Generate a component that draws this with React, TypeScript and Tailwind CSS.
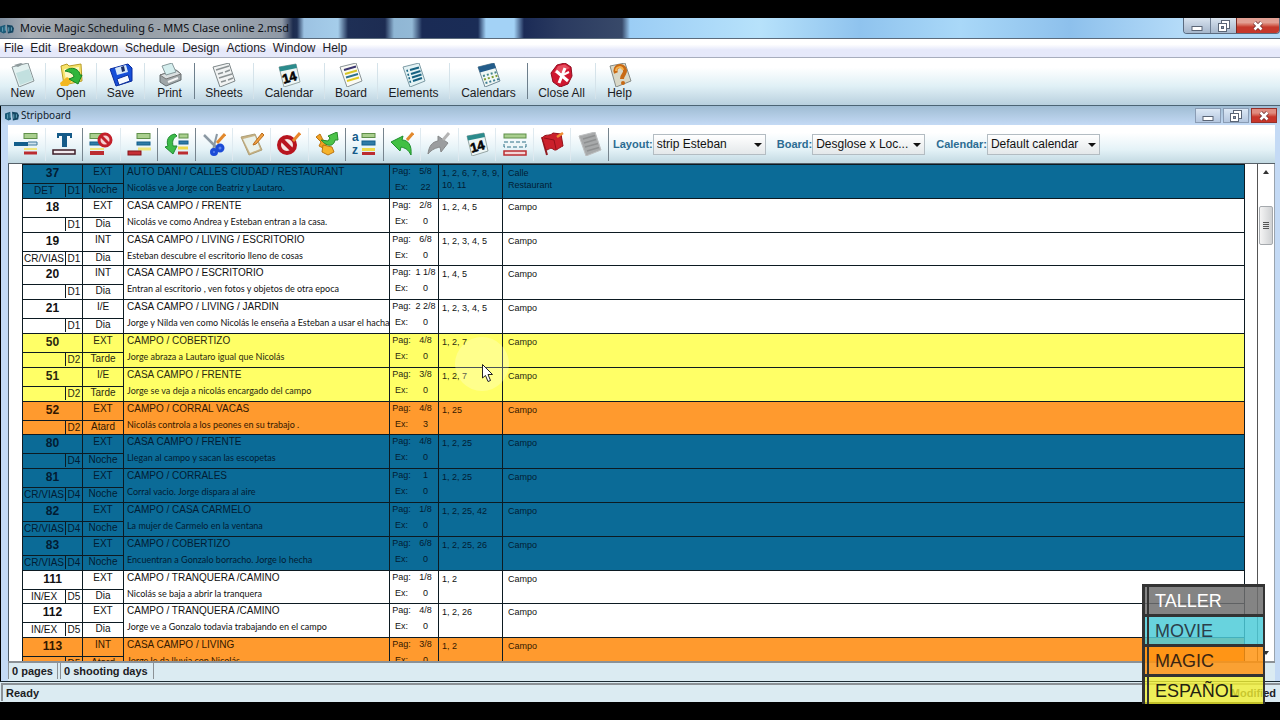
import type { ReactNode } from "react";

type Tone = "day" | "evening" | "dusk" | "night";

interface Strip {
  scene: string;
  tag: string;
  day: string;
  place: string;
  time: string;
  slug: string;
  text: string;
  pages: string;
  extras: string;
  cast: string[];
  location: string[];
  tone: Tone;
}

const TONES: Record<Tone, string> = {
  day: "bg-white text-[#111]",
  evening: "bg-[#ffff66] text-[#2a2a10]",
  dusk: "bg-[#ff9a2e] text-[#331800]",
  night: "bg-[#0b6b97] text-[#021c33]",
};

const STRIPS: Strip[] = [
  { scene: "37", tag: "DET", day: "D1", place: "EXT", time: "Noche", slug: "AUTO DANI / CALLES CIUDAD / RESTAURANT", text: "Nicolás ve a Jorge con Beatriz y Lautaro.", pages: "5/8", extras: "22", cast: ["1, 2, 6, 7, 8, 9,", "10, 11"], location: ["Calle", "Restaurant"], tone: "night" },
  { scene: "18", tag: "", day: "D1", place: "EXT", time: "Dia", slug: "CASA CAMPO / FRENTE", text: "Nicolás ve como Andrea y Esteban entran a la casa.", pages: "2/8", extras: "0", cast: ["1, 2, 4, 5"], location: ["Campo"], tone: "day" },
  { scene: "19", tag: "CR/VIAS", day: "D1", place: "INT", time: "Dia", slug: "CASA CAMPO / LIVING / ESCRITORIO", text: "Esteban descubre el escritorio lleno de cosas", pages: "6/8", extras: "0", cast: ["1, 2, 3, 4, 5"], location: ["Campo"], tone: "day" },
  { scene: "20", tag: "", day: "D1", place: "INT", time: "Dia", slug: "CASA CAMPO / ESCRITORIO", text: "Entran al escritorio , ven fotos y objetos de otra epoca", pages: "1 1/8", extras: "0", cast: ["1, 4, 5"], location: ["Campo"], tone: "day" },
  { scene: "21", tag: "", day: "D1", place: "I/E", time: "Dia", slug: "CASA CAMPO / LIVING / JARDIN", text: "Jorge y Nilda ven como Nicolás le enseña a Esteban a usar el hacha", pages: "2 2/8", extras: "0", cast: ["1, 2, 3, 4, 5"], location: ["Campo"], tone: "day" },
  { scene: "50", tag: "", day: "D2", place: "EXT", time: "Tarde", slug: "CAMPO / COBERTIZO", text: "Jorge abraza a Lautaro igual que Nicolás", pages: "4/8", extras: "0", cast: ["1, 2, 7"], location: ["Campo"], tone: "evening" },
  { scene: "51", tag: "", day: "D2", place: "I/E", time: "Tarde", slug: "CASA CAMPO / FRENTE", text: "Jorge se va deja a nicolás encargado del campo", pages: "3/8", extras: "0", cast: ["1, 2, 7"], location: ["Campo"], tone: "evening" },
  { scene: "52", tag: "", day: "D2", place: "EXT", time: "Atard", slug: "CAMPO / CORRAL VACAS", text: "Nicolás controla a los peones en su trabajo .", pages: "4/8", extras: "3", cast: ["1, 25"], location: ["Campo"], tone: "dusk" },
  { scene: "80", tag: "", day: "D4", place: "EXT", time: "Noche", slug: "CASA CAMPO / FRENTE", text: "Llegan al campo y sacan las escopetas", pages: "4/8", extras: "0", cast: ["1, 2, 25"], location: ["Campo"], tone: "night" },
  { scene: "81", tag: "CR/VIAS", day: "D4", place: "EXT", time: "Noche", slug: "CAMPO / CORRALES", text: "Corral vacio. Jorge dispara al aire", pages: "1", extras: "0", cast: ["1, 2, 25"], location: ["Campo"], tone: "night" },
  { scene: "82", tag: "CR/VIAS", day: "D4", place: "EXT", time: "Noche", slug: "CAMPO / CASA CARMELO", text: "La mujer de Carmelo en la ventana", pages: "1/8", extras: "0", cast: ["1, 2, 25, 42"], location: ["Campo"], tone: "night" },
  { scene: "83", tag: "CR/VIAS", day: "D4", place: "EXT", time: "Noche", slug: "CAMPO / COBERTIZO", text: "Encuentran a Gonzalo borracho. Jorge lo hecha", pages: "6/8", extras: "0", cast: ["1, 2, 25, 26"], location: ["Campo"], tone: "night" },
  { scene: "111", tag: "IN/EX", day: "D5", place: "EXT", time: "Dia", slug: "CAMPO / TRANQUERA /CAMINO", text: "Nicolás se baja a abrir la tranquera", pages: "1/8", extras: "0", cast: ["1, 2"], location: ["Campo"], tone: "day" },
  { scene: "112", tag: "IN/EX", day: "D5", place: "EXT", time: "Dia", slug: "CAMPO / TRANQUERA /CAMINO", text: "Jorge ve a Gonzalo todavia trabajando en el campo", pages: "4/8", extras: "0", cast: ["1, 2, 26"], location: ["Campo"], tone: "day" },
  { scene: "113", tag: "", day: "D5", place: "INT", time: "Atard", slug: "CASA CAMPO / LIVING", text: "Jorge le da lluvia con Nicolás", pages: "3/8", extras: "0", cast: ["1, 2"], location: ["Campo"], tone: "dusk" },
];

function Icon({ children }: { children: ReactNode }) {
  return (
    <svg viewBox="0 0 24 24" className="size-6" aria-hidden="true">
      {children}
    </svg>
  );
}

const PAGE = "M1 4 L17 0 L23 18 L8 24 Z";

const newIcon = (
  <Icon>
    <path d={PAGE} fill="#e3f1f0" stroke="#8a9698" />
    <path d="M5 10 L18 6 L22 17 L9 22 Z" fill="#c2e0df" />
    <path d="M3 2 L7 4 L12 1 L10 0 Z" fill="#8d999b" />
  </Icon>
);
const openIcon = (
  <Icon>
    <path d="M2 3 L8 1 L10 3 L22 1 L23 18 L5 22 Z" fill="#f7e36a" stroke="#b99c29" />
    <path d="M5 6 L20 4 L20 15 L7 17 Z" fill="#fdf8c4" />
    <path d="M1 20 L8 14 L13 17 L9 23 L2 23 Z" fill="#f2b822" />
    <path d="M6 8 C13 2 21 7 21 12 L23 12 L19 21 L10 16 L15 14 C14 10 11 9 6 8 Z" fill="#2fb53a" stroke="#158323" />
  </Icon>
);
const saveIcon = (
  <Icon>
    <path d="M1 6 L19 1 L23 5 L23 18 L7 23 Z" fill="#164fd8" stroke="#0a2b9c" />
    <path d="M6 5 L17 2 L19 9 L8 12 Z" fill="#d8e9f8" />
    <path d="M12 4 L15 3 L16 8 L13 9 Z" fill="#1a2c66" />
    <path d="M8 16 L19 12 L21 18 L10 22 Z" fill="#f5f9ff" stroke="#0b2f9a" />
  </Icon>
);
const printIcon = (
  <Icon>
    <path d="M2 12 L18 7 L23 11 L23 17 L8 23 L2 19 Z" fill="#9fa6a8" stroke="#666e71" />
    <path d="M2 12 L18 7 L23 11 L8 16 Z" fill="#dadfe0" stroke="#777" />
    <path d="M4 3 L14 0 L18 9 L8 12 Z" fill="#d5eeee" stroke="#86999b" />
    <path d="M10 19 L20 15" stroke="#f5f5f5" strokeWidth="2" />
  </Icon>
);
const sheetsIcon = (
  <Icon>
    <path d={PAGE} fill="#f1f3f3" stroke="#7e8789" />
    <path d="M4 7 L17 3 M6 11 L11 9.500 M13 9 L18 7 M7 15 L20 11 M9 19 L14 17.500 M16 17 L21 15" stroke="#8b9294" strokeWidth="1.600" />
  </Icon>
);
const calendarIcon = (
  <Icon>
    <path d="M2 4 L19 1 L23 19 L7 24 Z" fill="#eef6f5" stroke="#95a5a5" />
    <path d="M2 4 L19 1 L20 5 L3 8.500 Z" fill="#2b8b8c" />
    <text x="5" y="19" fontSize="13" fontWeight="700" stroke="#050505" strokeWidth="0.600" fontFamily="Liberation Sans, sans-serif" transform="rotate(-16 12 14)" fill="#050505">14</text>
  </Icon>
);
const boardIcon = (
  <Icon>
    <path d={PAGE} fill="#fafaf4" stroke="#8b9496" />
    <path d="M5 7 L17 3.500" stroke="#3b3570" strokeWidth="2" />
    <path d="M6 11 L18 7.500" stroke="#d6c527" strokeWidth="2" />
    <path d="M7 14.500 L19 11" stroke="#2c7191" strokeWidth="2" />
    <path d="M8 18 L20 14.500" stroke="#e0cc26" strokeWidth="2" />
  </Icon>
);
const elementsIcon = (
  <Icon>
    <path d={PAGE} fill="#e4f3f5" stroke="#7d9ba4" />
    <path d="M8 7 L17 4.500 M9 11 L18.500 8 M10 14.500 L19.500 11.500 M11 18 L20 15" stroke="#176281" strokeWidth="2" />
    <path d="M4.500 8 L6 7.500 M5.500 12 L7 11.500 M6.500 15.500 L8 15 M7.500 19 L9 18.500" stroke="#176281" strokeWidth="2" />
  </Icon>
);
const calendarsIcon = (
  <Icon>
    <path d={PAGE} fill="#f0f7f4" stroke="#718a98" />
    <path d="M1 4 L17 0 L19 5 L3 9.500 Z" fill="#235c8a" />
    <path d="M6 13 L20 9" stroke="#45868a" strokeWidth="2" strokeDasharray="2 2" />
    <path d="M7 16.500 L21 12.500" stroke="#7e9c33" strokeWidth="2" strokeDasharray="2 2" />
    <path d="M8.500 20 L22 16" stroke="#3f7f95" strokeWidth="2" strokeDasharray="2 2" />
  </Icon>
);
const closeAllIcon = (
  <Icon>
    <path d="M7 2 L15 0 L21 4 L22 13 L18 21 L10 24 L3 19 L1 10 Z" fill="#cf1730" stroke="#900d20" />
    <path d="M8 3 L15 1.500 L20 5 L12 9 L4 10 Z" fill="#e64d5e" />
    <path d="M6 8 L18 18 M15 5 L9 20" stroke="#fff" strokeWidth="3" />
    <path d="M13 12 L19 9" stroke="#fff" strokeWidth="2" />
  </Icon>
);
const helpIcon = (
  <Icon>
    <path d="M2 3 L17 0 L23 18 L8 24 Z" fill="#d9d8c7" stroke="#858b87" />
    <path d="M8 10 C5 3 15 0 17 7 C18 11 14 11 14 16" fill="none" stroke="#c86a14" strokeWidth="4" />
    <path d="M8 8 C8 3 14 3 15 7" fill="none" stroke="#f7b14c" strokeWidth="2" />
    <circle cx="15" cy="20" r="2" fill="#c86a14" />
  </Icon>
);

const insertStripIcon = (
  <Icon>
    <rect x="10" y="1.500" width="13" height="5" fill="#a9cf8e" stroke="#5f8f4a" />
    <path d="M0 12 H14" stroke="#135f8c" strokeWidth="4" />
    <path d="M14 10 H23 V13 H14" fill="#cfe3ee" stroke="#417a9b" />
    <path d="M10 17 H23" stroke="#efe67c" strokeWidth="2" />
    <path d="M10 21 H23" stroke="#bb2c30" strokeWidth="3" />
  </Icon>
);
const bannerIcon = (
  <Icon>
    <path d="M5 1 H20 V6 H18 V4 H15 V15 H10 V4 H7 V6 H5 Z" fill="#155b89" />
    <rect x="1" y="18" width="22" height="4" fill="#f1e9ee" stroke="#3d1c27" strokeWidth="1.500" />
  </Icon>
);
const noStripIcon = (
  <Icon>
    <rect x="1" y="1.500" width="13" height="5" fill="#a9cf8e" stroke="#5f8f4a" />
    <rect x="1" y="10" width="14" height="3" fill="#2f7ba6" stroke="#135f8c" />
    <path d="M1 17 H15" stroke="#efe67c" strokeWidth="2" />
    <path d="M1 21 H15" stroke="#bb2c30" strokeWidth="4" />
    <circle cx="16" cy="8" r="6" fill="#f6d3d3" stroke="#c3202a" strokeWidth="3" />
    <path d="M12 4 L20 12" stroke="#c3202a" strokeWidth="3" />
  </Icon>
);
const moveStripIcon = (
  <Icon>
    <rect x="10" y="1.500" width="13" height="5" fill="#a9cf8e" stroke="#5f8f4a" />
    <rect x="10" y="10" width="13" height="3" fill="#2f7ba6" stroke="#135f8c" />
    <path d="M11 17 H24" stroke="#efe67c" strokeWidth="3" />
    <rect x="1" y="19" width="13" height="4" fill="#c62f36" stroke="#83161b" />
  </Icon>
);
const swapIcon = (
  <Icon>
    <path d="M10 2 C3 3 1 9 3 14 L0 15 L8 22 L12 14 L8 14 C7 9 8 6 12 4 Z" fill="#3cbb49" stroke="#208a31" />
    <rect x="14" y="2" width="9" height="4" fill="#a9cf8e" stroke="#5f8f4a" />
    <rect x="14" y="9" width="9" height="3" fill="#2f7ba6" stroke="#135f8c" />
    <path d="M13 16 H23" stroke="#ecd94b" strokeWidth="3" />
    <path d="M13 21 H23" stroke="#bb2c30" strokeWidth="3" />
  </Icon>
);
const cutIcon = (
  <Icon>
    <path d="M2 3 L15 16" stroke="#8b98a3" strokeWidth="2.500" />
    <path d="M15 2 L11 18" stroke="#8b98a3" strokeWidth="2" />
    <path d="M23 2 L15 11" stroke="#e2892d" strokeWidth="3" />
    <circle cx="18" cy="16" r="3" fill="#5c83ee" stroke="#1c4bd6" strokeWidth="3" />
    <circle cx="12" cy="20" r="2.500" fill="#5c83ee" stroke="#1c4bd6" strokeWidth="3" />
  </Icon>
);
const editIcon = (
  <Icon>
    <path d="M1 5 L15 2 L22 18 L9 23 Z" fill="#c7b284" stroke="#b0a077" />
    <path d="M3 7 L15 4 L20 17 L10 21 Z" fill="#e9f1ea" />
    <path d="M22 1 L14 11 L13 13 L16 12 L24 3 Z" fill="#f0a143" stroke="#b86b1b" />
  </Icon>
);
const denyIcon = (
  <Icon>
    <circle cx="10" cy="13" r="8" fill="#f5e6e3" stroke="#b8151f" strokeWidth="4" />
    <path d="M5 8 L16 19" stroke="#b8151f" strokeWidth="4" />
    <path d="M23 1 L16 9" stroke="#e8872c" strokeWidth="3" />
  </Icon>
);
const flowIcon = (
  <Icon>
    <path d="M1 5 L5 2 L8 8 L12 10 L10 17 L4 14 L6 10 Z" fill="#f2a122" stroke="#bc7411" />
    <path d="M8 13 L17 15 L19 20 L13 23 L7 20 Z" fill="#f5b32b" stroke="#bc7411" />
    <path d="M6 8 L13 9 L15 6 L13 4 L22 0 L23 8 L20 8 C19 14 13 16 6 8 Z" fill="#4cc34a" stroke="#27892a" />
  </Icon>
);
const sortIcon = (
  <Icon>
    <text x="0" y="9" fontSize="12" fontWeight="700" fontFamily="Liberation Sans, sans-serif" fill="#155b89">a</text>
    <text x="0" y="22" fontSize="12" fontWeight="700" fontFamily="Liberation Sans, sans-serif" fill="#155b89">z</text>
    <rect x="10" y="1.500" width="13" height="4" fill="#a9cf8e" stroke="#5f8f4a" />
    <rect x="10" y="9" width="13" height="4" fill="#2f7ba6" stroke="#135f8c" />
    <path d="M10 17.500 H23" stroke="#ecd94b" strokeWidth="3" />
    <path d="M10 21.500 H23" stroke="#bb2c30" strokeWidth="3" />
  </Icon>
);
const undoIcon = (
  <Icon>
    <path d="M1 10 L13 4 L12 8 C18 8 22 13 21 23 C18 17 15 16 11 15 L10 19 Z" fill="#42c043" stroke="#1d8f2c" />
    <path d="M23 1 L17 8" stroke="#e2892d" strokeWidth="3" />
  </Icon>
);
const redoIcon = (
  <Icon>
    <path d="M21 11 L11 4 L11 9 C5 10 2 14 1 22 C5 17 9 16 13 15 L14 20 Z" fill="#9b9d9f" stroke="#868889" />
    <path d="M22 1 L16 8" stroke="#b4b4b4" strokeWidth="3" />
  </Icon>
);
const breaksIcon = (
  <Icon>
    <rect x="1" y="2" width="22" height="4" fill="#a9cf8e" stroke="#5f8f4a" />
    <rect x="1" y="10" width="22" height="5" fill="#eef6f8" stroke="#2f7186" strokeDasharray="4 2" />
    <rect x="1" y="19" width="22" height="4" fill="#f3d6d7" stroke="#bb2c30" strokeWidth="1.500" />
  </Icon>
);
const flagIcon = (
  <Icon>
    <path d="M2 5 L7 23" stroke="#8f1c22" strokeWidth="2" />
    <path d="M2 6 C6 1 9 5 13 1 L21 2 L23 14 C18 16 16 20 13 17 C10 15 9 18 6 18 Z" fill="#cb202b" stroke="#931119" />
    <path d="M4 6 L14 8 L16 17" fill="none" stroke="#931119" />
    <path d="M17 5 L23 1" stroke="#ef8f35" strokeWidth="2.500" />
  </Icon>
);
const notesIcon = (
  <Icon>
    <path d={PAGE} fill="#a7a9aa" stroke="#bcbebf" />
    <path d="M5 7 L17 3.500 M6 11 L18 7.500 M7 15 L20 11.500 M9 19 L21 15.500" stroke="#8e9091" strokeWidth="1.600" />
  </Icon>
);

const MAIN_TOOLS: { label: string; icon: ReactNode; size: string; edge: string }[] = [
  { label: "New", icon: newIcon, size: "w-[46px]", edge: "border-[#d5e3ea]" },
  { label: "Open", icon: openIcon, size: "w-[51px]", edge: "border-[#d5e3ea]" },
  { label: "Save", icon: saveIcon, size: "w-[48px]", edge: "border-[#d5e3ea]" },
  { label: "Print", icon: printIcon, size: "w-[50px]", edge: "border-[#6d7f8c]" },
  { label: "Sheets", icon: sheetsIcon, size: "w-[59px]", edge: "border-[#d5e3ea]" },
  { label: "Calendar", icon: calendarIcon, size: "w-[71px]", edge: "border-[#d5e3ea]" },
  { label: "Board", icon: boardIcon, size: "w-[53px]", edge: "border-[#d5e3ea]" },
  { label: "Elements", icon: elementsIcon, size: "w-[72px]", edge: "border-[#d5e3ea]" },
  { label: "Calendars", icon: calendarsIcon, size: "w-[78px]", edge: "border-[#6d7f8c]" },
  { label: "Close All", icon: closeAllIcon, size: "w-[68px]", edge: "border-[#d5e3ea]" },
  { label: "Help", icon: helpIcon, size: "w-[48px]", edge: "border-transparent" },
];

const BOARD_TOOLS: { label: string; icon: ReactNode; divider?: boolean }[] = [
  { label: "Insert strip", icon: insertStripIcon },
  { label: "Insert banner", icon: bannerIcon, divider: true },
  { label: "Remove strip", icon: noStripIcon },
  { label: "Move strip", icon: moveStripIcon, divider: true },
  { label: "Swap", icon: swapIcon, divider: true },
  { label: "Cut", icon: cutIcon },
  { label: "Edit", icon: editIcon },
  { label: "Deny", icon: denyIcon },
  { label: "Flow", icon: flowIcon, divider: true },
  { label: "Sort", icon: sortIcon, divider: true },
  { label: "Undo", icon: undoIcon },
  { label: "Redo", icon: redoIcon },
  { label: "Calendar day", icon: calendarIcon },
  { label: "Day breaks", icon: breaksIcon },
  { label: "Flag", icon: flagIcon },
  { label: "Notes", icon: notesIcon, divider: true },
];

function Logo() {
  return (
    <svg viewBox="0 0 16 12" className="h-3 w-[14px] shrink-0" aria-hidden="true">
      <path d="M0 3 L6 1 L7 10 L4 11 L0 9 Z" fill="#1b5a78" />
      <path d="M8 1 L14 2 L16 5 L15 10 L9 11 Z" fill="#154763" />
      <path d="M3 4 V9 M6 3 V8 M10 4 V9 M13 4 V8" stroke="#6fb0c6" />
    </svg>
  );
}

function MinimizeGlyph() {
  return (
    <svg viewBox="0 0 12 12" className="size-3" aria-hidden="true">
      <rect x="1" y="6.500" width="10" height="4" fill="#fff" stroke="#5a6576" />
    </svg>
  );
}
function RestoreGlyph() {
  return (
    <svg viewBox="0 0 12 12" className="size-3" aria-hidden="true">
      <rect x="3.500" y="0.500" width="8" height="8" fill="#fff" stroke="#5a6576" />
      <rect x="0.500" y="3.500" width="8" height="8" fill="#fff" stroke="#5a6576" />
      <rect x="3.500" y="6.500" width="2" height="2" fill="#8e9cb0" stroke="#5a6576" />
    </svg>
  );
}
function CloseGlyph() {
  return (
    <svg viewBox="0 0 12 12" className="size-3" aria-hidden="true">
      <path d="M2.500 2.500 L9.500 9.500 M9.500 2.500 L2.500 9.500" stroke="#6b2a2a" strokeWidth="4" />
      <path d="M2.500 2.500 L9.500 9.500 M9.500 2.500 L2.500 9.500" stroke="#fff" strokeWidth="2.600" />
    </svg>
  );
}

function Picker({ id, label, value }: { id: string; label: string; value: string }) {
  return (
    <div className="flex items-center">
      <label htmlFor={id} className="text-[11px] font-bold text-[#2c6c92]">
        {label}
      </label>
      <div className="relative">
        <select
          id={id}
          className="block h-[21px] w-[113px] appearance-none border border-[#b3bcc2] bg-linear-to-b from-white to-[#e4e8ea] pl-[3px] text-xs text-[#111]"
        >
          <option>{value}</option>
        </select>
        <svg viewBox="0 0 8 4" className="pointer-events-none absolute top-[9px] right-1 h-1 w-2" aria-hidden="true">
          <path d="M0 0 H8 L4 4 Z" fill="#111" />
        </svg>
      </div>
    </div>
  );
}

function StripRow({ strip }: { strip: Strip }) {
  const cell = "border-t border-l border-[#0c1a22] p-0 align-top";
  return (
    <tr className={TONES[strip.tone]}>
      <td className={cell}>
        <div className="h-[18px] text-center text-xs leading-[16px] font-bold">{strip.scene}</div>
        <div className="grid h-[14px] grid-cols-[42px_1fr] border-t border-[#0c1a22] text-center text-[10px] leading-[13px]">
          <span>{strip.tag}</span>
          <span className="border-l border-[#0c1a22]">{strip.day}</span>
        </div>
      </td>
      <td className={`${cell} text-center text-[10px]`}>
        <div className="h-[18px] leading-[14px]">{strip.place}</div>
        <div className="border-t border-[#0c1a22] leading-[12px]">{strip.time}</div>
      </td>
      <td className={`${cell} pl-[3px] whitespace-nowrap`}>
        <div className="h-[17px] text-[10px] leading-[14px]">{strip.slug}</div>
        <div className="font-[Lato,sans-serif] text-[9px] leading-[12px]">{strip.text}</div>
      </td>
      <td className={`${cell} text-[9px]`}>
        <div className="grid grid-cols-[23px_1fr] grid-rows-[16px_15px] text-center leading-[12px] whitespace-nowrap">
          <span>Pag:</span>
          <span>{strip.pages}</span>
          <span>Ex:</span>
          <span>{strip.extras}</span>
        </div>
      </td>
      <td className={`${cell} pt-[2px] pl-[3px] text-[9px] leading-[12px] whitespace-nowrap`}>
        {strip.cast.map((line) => (
          <div key={line}>{line}</div>
        ))}
      </td>
      <td className={`${cell} border-r pt-[2px] pl-[5px] text-[9px] leading-[12px]`}>
        {strip.location.map((line) => (
          <div key={line}>{line}</div>
        ))}
      </td>
    </tr>
  );
}

const BADGE_ROWS = [
  { word: "TALLER", look: "bg-[#6e6e6e]/85 text-white" },
  { word: "MOVIE", look: "bg-[#4ecbd8]/85 text-[#2b3f4a]" },
  { word: "MAGIC", look: "bg-[#ff9412]/85 text-[#3a2512]" },
  { word: "ESPAÑOL", look: "bg-[#f2f032]/80 text-[#222211]" },
];

function CourseBadge() {
  return (
    <div className="absolute right-[15px] bottom-4 w-[123px]">
      {BADGE_ROWS.map((row) => (
        <div key={row.word} className={`h-[30px] border-t-3 border-r-2 border-l-3 border-[#333] pl-[2px] ${row.look}`}>
          <div className="h-full border-l-2 border-[#333] pl-[6px] text-lg leading-[28px]">{row.word}</div>
        </div>
      ))}
    </div>
  );
}

export default function App() {
  return (
    <div className="relative flex h-screen flex-col overflow-hidden bg-black pt-[18px] pb-[18px] font-[Liberation_Sans,Arial,sans-serif] text-[#1c2024]">
      <header className="flex h-[21px] shrink-0 items-start justify-between border-b border-[#5b6b7c] bg-[linear-gradient(90deg,#7f8fa0_0,#a9afb6_30px,#8d959e_100px,#a3abb3_200px,#8f99a6_282px,#1d2c4e_293px,#1f3054_297px,#9cc2e2_304px,#a5cdea_338px,#1e2f55_348px,#1d2c52_385px,#8fb6d4_394px,#93b9d6_412px,#1a2b55_422px,#1a2c56_478px,#a3d2f6_486px,#a3d2f6_514px,#1b2b56_524px,#2a3a60_560px,#384969_622px,#9bcdf5_630px,#b7e2fb_760px,#8fc3ee_860px,#a9d8f8_960px,#8dc0ec_1070px,#b4dbf8_1180px)]">
        <div className="flex h-[21px] items-center gap-[6px] font-[Noto_Sans,sans-serif] text-[11px] text-[#0c0f14]">
          <Logo />
          <h1>Movie Magic Scheduling 6 - MMS Clase online 2.msd</h1>
        </div>
        <div className="flex h-4 w-[97px] overflow-hidden rounded-b border border-t-0 border-[#5a6b80]">
          <button aria-label="Minimize" className="flex w-[27px] items-center justify-center border-r border-[#6d7d92] bg-linear-to-b from-[#d8e3ef] to-[#a5b6cb]">
            <MinimizeGlyph />
          </button>
          <button aria-label="Restore" className="flex w-[25px] items-center justify-center bg-linear-to-b from-[#d8e3ef] to-[#a5b6cb]">
            <RestoreGlyph />
          </button>
          <button aria-label="Close" className="flex flex-1 items-center justify-center border-l border-[#7b2a22] bg-linear-to-b from-[#e2a094] from-30% to-[#c5382b] to-60%">
            <CloseGlyph />
          </button>
        </div>
      </header>

      <nav className="flex h-[19px] shrink-0 items-center gap-[7px] border-b border-[#a7adbd] bg-linear-to-b from-white from-30% to-[#e6e9fa] to-60% pl-1 text-xs">
        {["File", "Edit", "Breakdown", "Schedule", "Design", "Actions", "Window", "Help"].map((item) => (
          <button key={item} className="leading-4">
            {item}
          </button>
        ))}
      </nav>

      <div className="flex h-12 shrink-0 items-center border-b border-[#4c6474] bg-linear-to-b from-white from-20% via-[#e0f0f6] via-60% to-[#b9d0de] pb-[2px]">
        {MAIN_TOOLS.map((tool) => (
          <button key={tool.label} className={`flex h-9 flex-col items-center border-r text-xs leading-3 whitespace-nowrap ${tool.size} ${tool.edge}`}>
            {tool.icon}
            <span>{tool.label}</span>
          </button>
        ))}
      </div>

      <main className="flex min-h-0 flex-1 flex-col border-l border-black bg-[#c4daf5] pr-[5px] pl-[7px]">
        <div className="-mr-[5px] -ml-[7px] flex h-[19px] shrink-0 items-center justify-between bg-linear-to-b from-[#9fbcd3] to-[#c4daf5] pr-[3px] pl-1">
          <div className="flex items-center gap-[2px] font-[Noto_Sans,sans-serif] text-[10px] text-[#10202c]">
            <Logo />
            <h2>Stripboard</h2>
          </div>
          <div className="flex h-[15px] gap-[2px]">
            <button aria-label="Minimize board" className="flex w-[26px] items-center justify-center border border-[#8a9cb4] bg-linear-to-b from-[#dce8f5] to-[#b4c7df]">
              <MinimizeGlyph />
            </button>
            <button aria-label="Restore board" className="flex w-[26px] items-center justify-center border border-[#8a9cb4] bg-linear-to-b from-[#dce8f5] to-[#b4c7df]">
              <RestoreGlyph />
            </button>
            <button aria-label="Close board" className="flex w-[26px] items-center justify-center border border-[#963029] bg-linear-to-b from-[#e08c80] from-30% to-[#c8352a] to-60%">
              <CloseGlyph />
            </button>
          </div>
        </div>

        <div className="flex h-[39px] shrink-0 items-center border-b border-[#566068] bg-linear-to-b from-white from-20% via-[#e4f2f7] via-65% to-[#c2d9e2]">
          <div className="grid h-[33px] w-[601px] grid-cols-16">
            {BOARD_TOOLS.map((tool) => (
              <button
                key={tool.label}
                aria-label={tool.label}
                className={`flex items-center justify-center border-r ${tool.divider ? "border-[#76848e]" : "border-[#dfeaf0]"}`}
              >
                {tool.icon}
              </button>
            ))}
          </div>
          <div className="flex items-center gap-[11px] pl-1">
            <Picker id="layout" label="Layout:" value="strip Esteban" />
            <Picker id="board" label="Board:" value="Desglose x Loc..." />
            <Picker id="calendar" label="Calendar:" value="Default calendar" />
          </div>
        </div>

        <div className="relative flex min-h-0 flex-1 border-l border-[#4d5a66] bg-white">
          <div className="min-w-0 flex-1 overflow-hidden pr-3 pl-[13px]">
            <table className="h-[507px] w-full table-fixed border-separate border-spacing-0">
              <colgroup>
                <col className="w-[60px]" />
                <col className="w-[41px]" />
                <col className="w-[266px]" />
                <col className="w-[49px]" />
                <col className="w-[64px]" />
                <col />
              </colgroup>
              <tbody>
                {STRIPS.map((strip) => (
                  <StripRow key={strip.scene} strip={strip} />
                ))}
              </tbody>
            </table>
          </div>
          <div className="flex w-[18px] flex-col items-center border-r border-l border-r-[#9aa4ae] border-l-[#555] bg-white pt-[6px] pb-[6px]">
            <svg viewBox="0 0 6 4" className="h-1 w-[6px]" aria-hidden="true">
              <path d="M0 4 L3 0 L6 4 Z" fill="#333" />
            </svg>
            <div className="mt-8 flex h-[39px] w-[14px] flex-col items-center justify-center gap-[1px] rounded-xs border border-[#a5a9ad] bg-linear-to-r from-[#f4f4f4] to-[#cfd1d3]">
              <span className="h-px w-[6px] bg-[#555]" />
              <span className="h-px w-[6px] bg-[#555]" />
              <span className="h-px w-[6px] bg-[#555]" />
              <span className="h-px w-[6px] bg-[#555]" />
            </div>
            <svg viewBox="0 0 6 4" className="mt-auto h-1 w-[6px]" aria-hidden="true">
              <path d="M0 0 L3 4 L6 0 Z" fill="#333" />
            </svg>
          </div>
          <div className="absolute top-[173px] left-[446px] size-[54px] rounded-full bg-white/25" />
          <svg viewBox="0 0 12 19" className="absolute top-[200px] left-[473px] h-[19px] w-3" aria-hidden="true">
            <path d="M0.500 0.500 V14 L3.500 11.500 L6 17.500 L8.500 16.500 L6 10.500 H10.500 Z" fill="#fff" stroke="#222" />
          </svg>
        </div>

        <div className="flex h-[18px] shrink-0 border-t-2 border-[#8b9196] bg-[#dbebf2] text-[11px] leading-4 font-bold">
          <span className="border-r border-l border-[#8b9196] pr-1 pl-[3px]">0 pages</span>
          <span className="ml-[2px] border-r border-l border-[#8b9196] pr-[5px] pl-[3px]">0 shooting days</span>
        </div>
        <div className="h-[2px] shrink-0 bg-[#dbebf2]" />
      </main>

      <footer className="flex h-[21px] shrink-0 items-center justify-between border-t border-[#1b2a33] bg-[#dbebf2] text-[11px] font-bold">
        <div className="ml-px flex h-[18px] flex-1 items-center justify-between border-t-2 border-l-2 border-[#8b9196] pr-1 pl-[3px]">
          <span>Ready</span>
          <span>Modified</span>
        </div>
      </footer>

      <CourseBadge />
    </div>
  );
}
